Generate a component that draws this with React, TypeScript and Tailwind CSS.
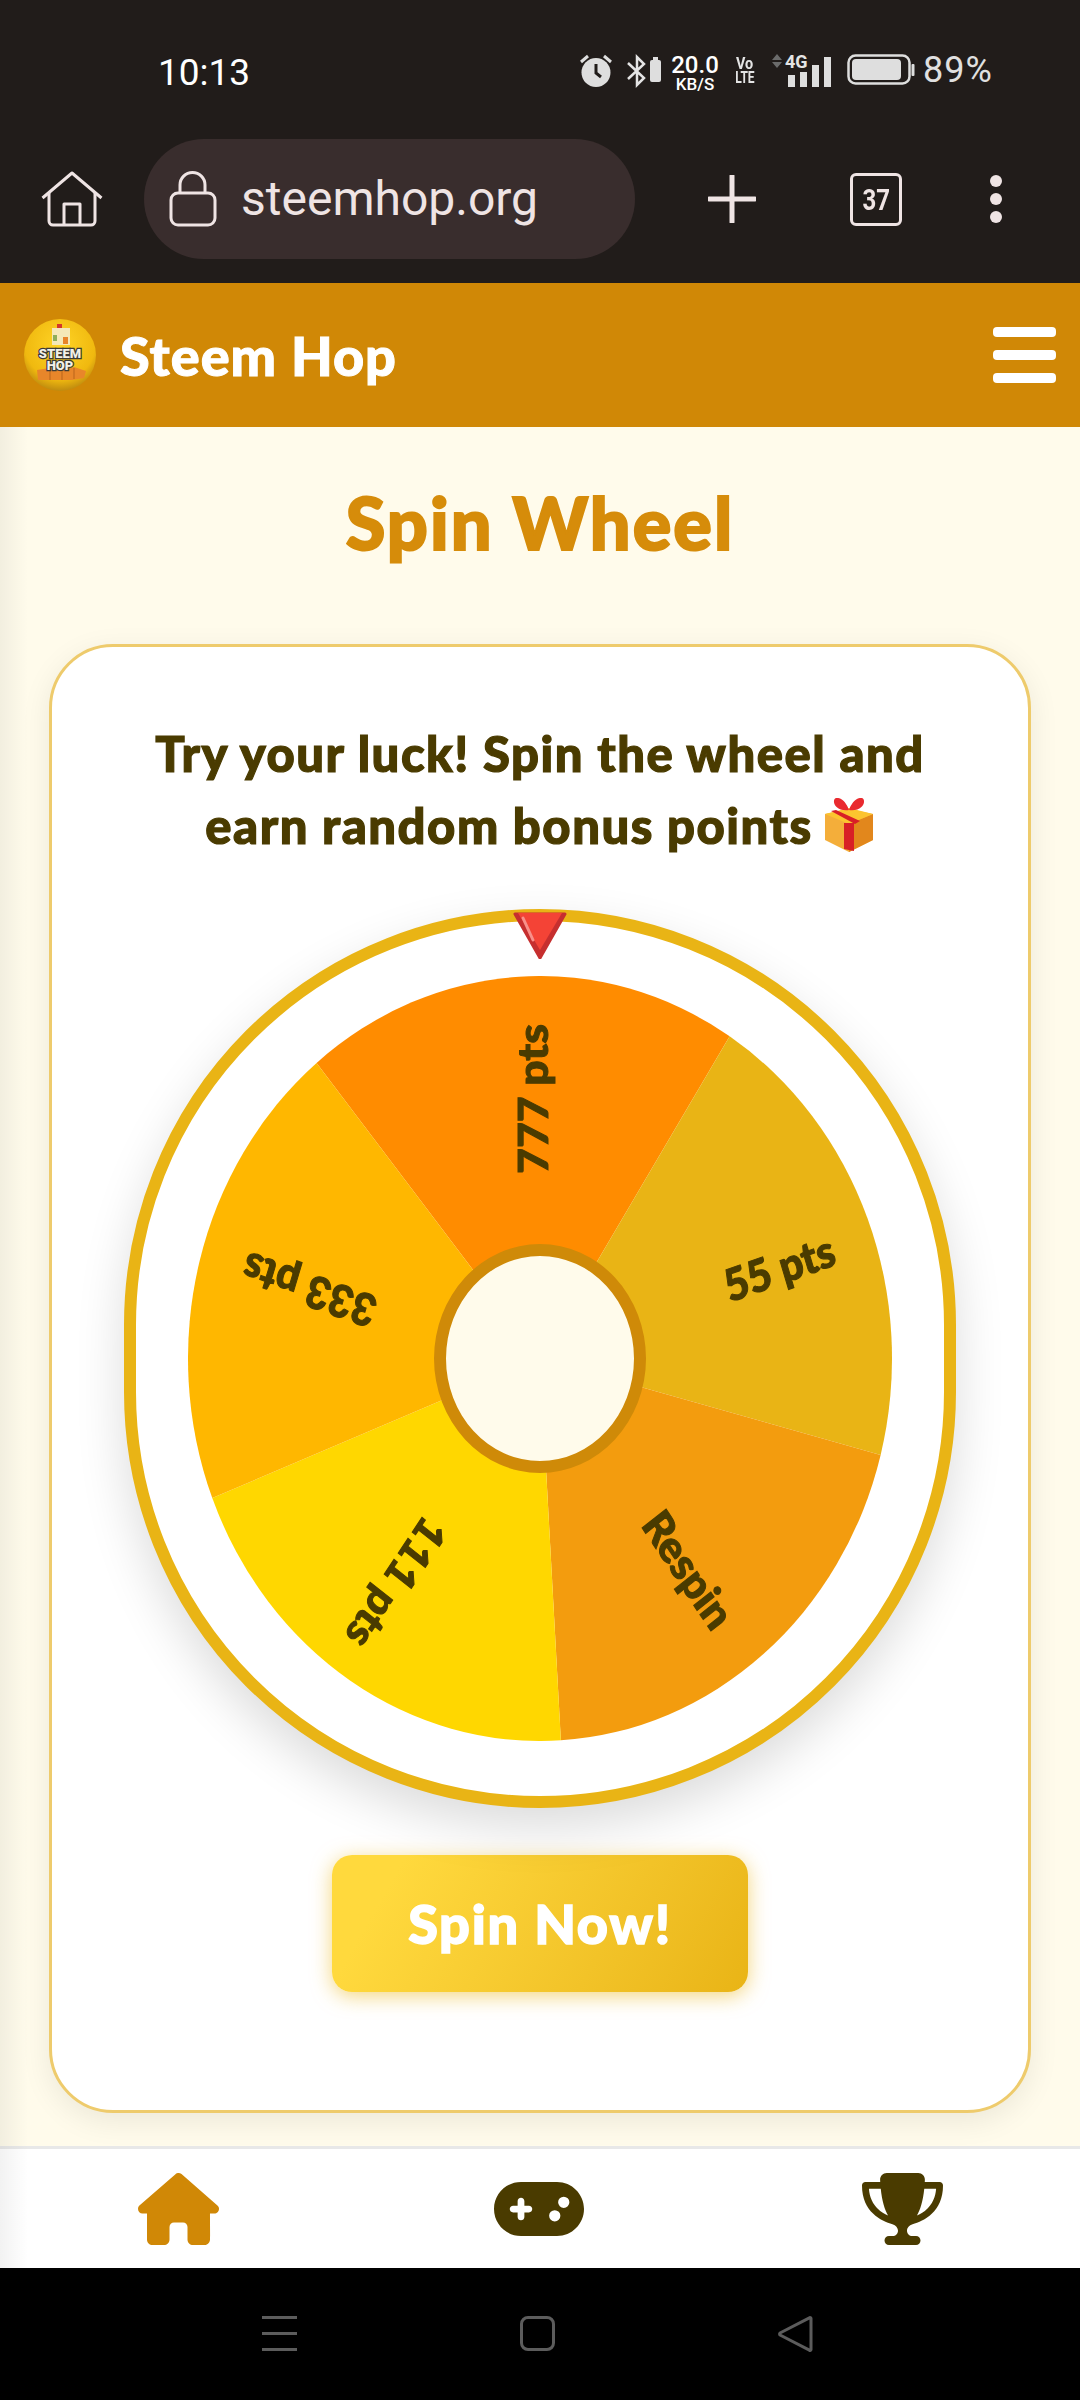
import { FaHouse, FaGamepad, FaTrophy } from 'react-icons/fa6';

const roboto = "font-['Roboto',sans-serif]";
const display = "font-['Lato',sans-serif]";

const RX = 352;
const RY = 382.5;

const rim = (deg: number) => {
  const a = (deg * Math.PI) / 180;
  return `${352 + RX * Math.cos(a)} ${382.5 + RY * Math.sin(a)}`;
};

const segments = [
  { from: -129.4, to: -57.4, fill: '#ff8c00' },
  { from: -57.4, to: 14.6, fill: '#e9b415' },
  { from: 14.6, to: 86.6, fill: '#f39c0e' },
  { from: 86.6, to: 158.6, fill: '#ffd700' },
  { from: 158.6, to: 230.6, fill: '#ffb700' }
];

const labels = [
  { text: '777 pts', x: 344, y: 123, angle: -90 },
  { text: '55 pts', x: 591, y: 291, angle: -18 },
  { text: 'Respin', x: 501, y: 593, angle: 54 },
  { text: '111 pts', x: 209, y: 608, angle: 126 },
  { text: '333 pts', x: 121, y: 315, angle: 198 }
];

function StatusBar() {
  return (
    <div className="h-[139px] flex items-start pt-[54px] pl-[158px] text-[#e4e4e4]">
      <span className={`${roboto} text-[37px] leading-[37px] text-white w-[92px]`}>10:13</span>
      <svg width="32" height="34" viewBox="0 0 32 34" className="ml-[330px]">
        <circle cx="16" cy="18.5" r="14.5" fill="#dedede" />
        <path d="M16 10v9l5 4" stroke="#211c1a" strokeWidth="3" fill="none" />
        <path d="M1 8l7-6M31 8l-7-6" stroke="#dedede" strokeWidth="3" />
      </svg>
      <svg width="34" height="34" viewBox="0 0 34 34" className="ml-[15px]">
        <path d="M1 9l16 15-7 7V3l7 7-16 15" stroke="#e4e4e4" strokeWidth="2.5" fill="none" />
        <rect x="23" y="6" width="11" height="22" rx="2" fill="#dedede" />
        <rect x="26" y="3" width="5" height="3" fill="#dedede" />
      </svg>
      <div className={`${roboto} ml-[9px] mt-[1px] w-[50px] flex flex-col items-center font-medium text-white`}>
        <span className="text-[24px] leading-[20px]">20.0</span>
        <span className="text-[17px] leading-[15px] mt-[2px]">KB/S</span>
      </div>
      <div className={`${roboto} ml-[14px] mt-[3px] w-[21px] flex flex-col items-center font-bold text-[16px] leading-[14px]`}>
        <span className="scale-x-90">Vo</span>
        <span className="scale-x-75">LTE</span>
      </div>
      <svg width="59" height="33" viewBox="0 0 59 33" className="ml-[17px] overflow-visible">
        <path d="M0 6l5-6 5 6zM0 8l5 6 5-6z" fill="#6b6b6b" />
        <text x="13" y="14" fontSize="18" fontWeight="700" fontFamily="Roboto" fill="#e4e4e4">4G</text>
        <rect x="16" y="21" width="7" height="12" fill="#dedede" />
        <rect x="28" y="18" width="7" height="15" fill="#dedede" />
        <rect x="40" y="11" width="7" height="22" fill="#dedede" />
        <rect x="52" y="3" width="7" height="30" fill="#dedede" />
      </svg>
      <svg width="68" height="32" viewBox="0 0 68 32" className="ml-[16px]">
        <rect x="1.5" y="1.5" width="61" height="28" rx="7" fill="none" stroke="#dedede" strokeWidth="2.5" />
        <rect x="5" y="5" width="49" height="21" rx="4" fill="#dedede" />
        <rect x="64.5" y="10" width="3" height="12" rx="1" fill="#dedede" />
      </svg>
      <span className={`${roboto} ml-[8px] text-[36px] leading-[32px] tracking-[1px] text-[#e0e0e0]`}>89%</span>
    </div>
  );
}

function BrowserBar() {
  return (
    <div className="h-[120px] flex items-center">
      <svg width="62" height="56" viewBox="0 0 62 56" className="ml-[41px]" fill="none" stroke="#efe4e4" strokeWidth="3" strokeLinejoin="round">
        <path d="M1.5 27L31 2l29.5 25" />
        <path d="M8 22v28a4 4 0 0 0 4 4h38a4 4 0 0 0 4-4V22" />
        <path d="M23 54V33h16v21" />
      </svg>
      <div className="ml-[41px] w-[491px] h-[120px] rounded-[60px] bg-[#392d2d] flex items-center pl-[25px]">
        <svg width="48" height="56" viewBox="0 0 48 56" fill="none" stroke="#efe4e4" strokeWidth="3">
          <rect x="2" y="22" width="44" height="32" rx="7" />
          <path d="M11 22V14a12 12 0 0 1 25 0v8" />
        </svg>
        <span className={`${roboto} ml-[24px] text-[48px] leading-[56px] text-[#efe4e4]`}>steemhop.org</span>
      </div>
      <svg width="48" height="48" viewBox="0 0 48 48" className="ml-[73px]">
        <path d="M24 1v46M1 24h46" stroke="#efe4e4" strokeWidth="5" strokeLinecap="round" />
      </svg>
      <div className={`${roboto} ml-[94px] w-[52px] h-[53px] border-[3px] border-[#efe4e4] rounded-[6px] flex items-center justify-center text-[30px] font-bold text-[#efe4e4]`}>
        <span className="scale-x-80">37</span>
      </div>
      <div className="ml-[88px] flex flex-col gap-[6px]">
        <div className="w-[12px] h-[12px] rounded-full bg-[#efe4e4]" />
        <div className="w-[12px] h-[12px] rounded-full bg-[#efe4e4]" />
        <div className="w-[12px] h-[12px] rounded-full bg-[#efe4e4]" />
      </div>
    </div>
  );
}

function Logo() {
  return (
    <svg width="72" height="72" viewBox="0 0 72 72">
      <defs>
        <radialGradient id="logoBall" cx="50%" cy="35%" r="68%">
          <stop offset="0%" stopColor="#ffd426" />
          <stop offset="72%" stopColor="#f0b90f" />
          <stop offset="100%" stopColor="#b5820f" />
        </radialGradient>
      </defs>
      <circle cx="36" cy="36" r="36" fill="url(#logoBall)" />
      <rect x="33" y="5" width="5" height="4" fill="#d4362a" />
      <rect x="28" y="9" width="18" height="17" fill="#f4e8b8" />
      <rect x="29" y="16" width="4" height="6" fill="#8fae5a" />
      <rect x="39" y="18" width="5" height="7" fill="#e8842a" />
      <path d="M13 51l13-2 10 2 14-3 12 4-2 7-12 2H14z" fill="#e8862a" />
      <path d="M26 50v11M38 51v10M50 49v11" stroke="#b9641a" strokeWidth="1" />
      <text x="36" y="39" textAnchor="middle" fontSize="13" fontWeight="900" fontFamily="Roboto" fill="#f1f0e8" stroke="#3c3b36" strokeWidth="2.5" paintOrder="stroke">STEEM</text>
      <text x="36" y="51" textAnchor="middle" fontSize="13" fontWeight="900" fontFamily="Roboto" fill="#f1f0e8" stroke="#3c3b36" strokeWidth="2.5" paintOrder="stroke">HOP</text>
    </svg>
  );
}

function Gift() {
  return (
    <svg width="52" height="54" viewBox="0 0 52 54" className="inline-block align-baseline ml-[10px] -mb-[8px]">
      <path d="M2 16l24-5 24 5v26L26 54 2 42z" fill="#f4ae3a" />
      <path d="M26 26l24-10v26L26 54z" fill="#e2871c" />
      <path d="M2 16l24-6 24 6-24 10z" fill="#fcc42f" />
      <path d="M21 25l10 0v28l-10-2zM8 13l5-1 24 11-5 3z" fill="#d81f26" />
      <path d="M26 12C12 14 8 2 13 0c6-1 11 6 13 12zM26 12c14 2 18-10 13-12-6-1-11 6-13 12z" fill="#e92a2f" />
    </svg>
  );
}

function Wheel() {
  return (
    <div className="relative mt-[48px] w-[832px] h-[899px] rounded-full border-[12px] border-[#e9b415] bg-white flex items-center justify-center shadow-[0_20px_50px_rgba(0,0,0,0.14)]">
      <svg width="704" height="765" viewBox="0 0 704 765" className="blur-[0.7px]">
        {segments.map(s => (
          <path
            key={s.fill}
            d={`M352 382.5 L${rim(s.from)} A${RX} ${RY} 0 0 1 ${rim(s.to)} Z`}
            fill={s.fill}
          />
        ))}
        {labels.map(l => (
          <text
            key={l.text}
            transform={`translate(${l.x} ${l.y}) scale(1 1.087) rotate(${l.angle})`}
            textAnchor="middle"
            dominantBaseline="central"
            fontFamily="Lato"
            fontWeight="900"
            fontSize="41"
            fill="#4a3b00"
            stroke="#4a3b00"
            strokeWidth="1"
          >
            {l.text}
          </text>
        ))}
      </svg>
      <div className="absolute left-[298px] top-[323px] w-[212px] h-[229px] rounded-[50%] border-[12px] border-[#cf8a08] bg-[#fffbeb]" />
      <svg width="54" height="47" viewBox="0 0 54 47" className="absolute left-[377px] -top-[9px]">
        <path d="M2 2h50L27 46z" fill="#c62f2f" stroke="#c62f2f" strokeWidth="3" strokeLinejoin="round" />
        <path d="M5 1h44L27 38z" fill="#f44336" />
        <path d="M10 6l10 22" stroke="#f8908a" strokeWidth="3" strokeLinecap="round" />
      </svg>
    </div>
  );
}

export default function App() {
  return (
    <div className="relative w-[1080px] h-[2400px] flex flex-col bg-[#fffbeb]">
      <div className="h-[283px] bg-[#211c1a]">
        <StatusBar />
        <BrowserBar />
      </div>

      <header className="h-[144px] bg-[#d08806] flex items-center pl-[24px] pr-[24px]">
        <Logo />
        <span className={`${display} ml-[24px] text-[54px] tracking-[1px] font-black text-white [-webkit-text-stroke:1px_#fff]`}>Steem Hop</span>
        <div className="ml-auto flex flex-col gap-[13px]">
          <div className="w-[63px] h-[10px] rounded-[4px] bg-white" />
          <div className="w-[63px] h-[10px] rounded-[4px] bg-white" />
          <div className="w-[63px] h-[10px] rounded-[4px] bg-white" />
        </div>
      </header>

      <main className="flex-1 px-[49px] pt-[47px]">
        <h1 className={`${display} h-[96px] leading-[96px] text-center text-[72px] tracking-[2px] font-black text-[#d68c0a] [-webkit-text-stroke:2px_#d68c0a]`}>Spin Wheel</h1>
        <div className="mt-[74px] h-[1469px] rounded-[64px] border-[3px] border-[#eecb6c] bg-white pt-[70px] flex flex-col items-center shadow-[0_8px_30px_rgba(0,0,0,0.08)]">
          <p className={`${display} text-center text-[49px] leading-[72px] tracking-[1.5px] font-black text-[#4a3b00] [-webkit-text-stroke:1.2px_#4a3b00]`}>
            Try your luck! Spin the wheel and
            <br />
            earn random bonus points
            <Gift />
          </p>
          <Wheel />
          <button className={`${display} mt-[47px] w-[416px] h-[137px] rounded-[20px] bg-linear-120 from-[#ffd93d] from-15% to-[#e9b415] text-[54px] tracking-[1.7px] font-black text-white [-webkit-text-stroke:1.5px_#fff] shadow-[0_4px_20px_rgba(233,180,21,0.55)]`}>
            Spin Now!
          </button>
        </div>
      </main>

      <nav className="h-[122px] bg-white border-t-[3px] border-[#e8e8e8] flex items-start pt-[24px] pl-[138px]">
        <FaHouse className="w-[81px] h-[72px] text-[#d08806]" />
        <FaGamepad className="ml-[275px] w-[90px] h-[72px] text-[#4a3b00]" />
        <FaTrophy className="ml-[278px] w-[81px] h-[72px] text-[#4a3b00]" />
      </nav>

      <div className="h-[132px] bg-black flex items-start pt-[48px]">
        <div className="ml-[262px] w-[35px] flex flex-col gap-[13px]">
          <div className="h-[3px] bg-[#5c5c5c]" />
          <div className="h-[3px] bg-[#5c5c5c]" />
          <div className="h-[3px] bg-[#5c5c5c]" />
        </div>
        <div className="ml-[223px] w-[35px] h-[35px] border-[3px] border-[#5c5c5c] rounded-[8px]" />
        <svg width="36" height="36" viewBox="0 0 36 36" className="ml-[223px]">
          <path d="M33 2.5a1 1 0 0 0-1.6-.7L2 17a1.4 1.4 0 0 0 0 2l29.4 15.2a1 1 0 0 0 1.6-.7z" fill="none" stroke="#5c5c5c" strokeWidth="3" strokeLinejoin="round" />
        </svg>
      </div>

      {/* shadow of the closed side drawer, falls over the page's left edge */}
      <div className="absolute left-0 top-[427px] w-[28px] h-[1841px] bg-linear-to-r from-black/5 to-transparent pointer-events-none" />
    </div>
  );
}
